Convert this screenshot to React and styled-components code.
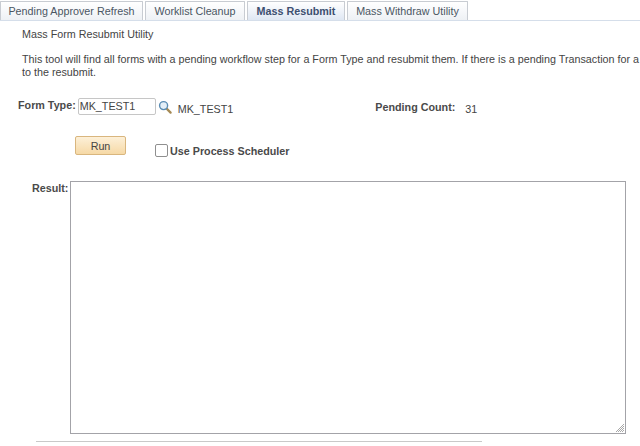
import React from 'react';
import styled, { createGlobalStyle } from 'styled-components';

const Global = createGlobalStyle`
	html, body {
		margin: 0;
		padding: 0;
		background: #fff;
		overflow: hidden;
	}
	body {
		font-family: "Liberation Sans", Arial, sans-serif;
		color: #333;
	}
`;

const Page = styled.div`
	width: 640px;
	height: 446px;
	overflow: hidden;
	display: flex;
	flex-direction: column;
`;

const TabBar = styled.div`
	display: flex;
	align-items: flex-end;
	gap: 2px;
	height: 20px;
	border-bottom: 1px solid #d5deea;
`;

const Tab = styled.div`
	height: 19px;
	box-sizing: border-box;
	display: flex;
	align-items: center;
	justify-content: center;
	width: ${p => p.$width}px;
	font-size: 10.75px;
	font-weight: ${p => (p.$active ? 700 : 400)};
	color: ${p => (p.$active ? '#3d4f70' : '#4a5663')};
	background: ${p => (p.$active ? 'linear-gradient(#fff, #dfe7f3)' : 'linear-gradient(#fff, #eef1f5)')};
	border: 1px solid #c8ccd2;
	border-bottom: 0;
	border-radius: 1px 1px 0 0;
	white-space: nowrap;
`;

const Content = styled.div`
	padding-left: 22px;
`;

const Heading = styled.div`
	margin-top: 6px;
	font-size: 10.75px;
	line-height: 14px;
	color: #444;
`;

const Intro = styled.p`
	margin: 12px 0 0;
	font-size: 10.75px;
	line-height: 13px;
	color: #444;
	white-space: nowrap;
`;

const Label = styled.label`
	font-size: 10.75px;
	font-weight: 700;
	color: #4a4a4a;
	white-space: nowrap;
`;

const FormRow = styled.div`
	display: flex;
	align-items: flex-start;
	margin-top: 19px;
	padding-left: 18px;
	height: 18px;
`;

const FormLabel = styled(Label)`
	line-height: 15px;
	margin-right: 2px;
`;

const TextBox = styled.div`
	box-sizing: border-box;
	width: 78px;
	height: 17px;
	padding-left: 1px;
	border: 1px solid #c6c6c6;
	border-radius: 2px;
	font-size: 10.75px;
	line-height: 14px;
	color: #444;
`;

const SearchIcon = styled.svg`
	width: 14px;
	height: 14px;
	margin: 2px 0 0 2px;
`;

const Value = styled.span`
	font-size: 10.75px;
	line-height: 14px;
	color: #444;
	margin: 4px 0 0 ${p => p.$left}px;
`;

const Pending = styled(Label)`
	line-height: 14px;
	margin: 2px 0 0 142px;
`;

const ActionRow = styled.div`
	display: flex;
	align-items: flex-start;
	margin-top: 20px;
	padding-left: 75px;
	height: 26px;
`;

const RunButton = styled.button`
	box-sizing: border-box;
	width: 51px;
	height: 19px;
	padding: 0;
	font: 400 10.75px "Liberation Sans", Arial, sans-serif;
	color: #444;
	background: linear-gradient(#fdf0d8, #f6d9a6);
	border: 1px solid #d9b67e;
	border-radius: 2px;
`;

const CheckLabel = styled.div`
	display: flex;
	align-items: center;
	margin: 9px 0 0 29px;
`;

const CheckBox = styled.span`
	box-sizing: border-box;
	width: 13px;
	height: 13px;
	margin: -2px 2px 0 0;
	background: #fff;
	border: 1px solid #8f8f8f;
	border-radius: 2px;
`;

const ResultRow = styled.div`
	display: flex;
	align-items: flex-start;
	margin-top: 19px;
	padding-left: 32px;
`;

const ResultLabel = styled(Label)`
	line-height: 14px;
	width: 38px;
`;

const ResultBox = styled.div`
	position: relative;
	box-sizing: border-box;
	width: 556px;
	height: 253px;
	background: #fff;
	border: 1px solid #a3a3a8;
`;

const Grip = styled.svg`
	position: absolute;
	right: 1px;
	bottom: 1px;
	width: 8px;
	height: 8px;
`;

const Rule = styled.div`
	width: 446px;
	height: 1px;
	margin: 7px 0 0 36px;
	background: #c9c9c9;
`;

const tabs = [
	{ name: 'Pending Approver Refresh', width: 143 },
	{ name: 'Worklist Cleanup', width: 100 },
	{ name: 'Mass Resubmit', width: 98, active: true },
	{ name: 'Mass Withdraw Utility', width: 121 }
];

export default function App() {
	return (
		<Page>
			<Global />
			<TabBar>
				{tabs.map(t => (
					<Tab key={t.name} $width={t.width} $active={t.active}>
						{t.name}
					</Tab>
				))}
			</TabBar>
			<Content>
				<Heading>Mass Form Resubmit Utility</Heading>
				<Intro>
					This tool will find all forms with a pending workflow step for a Form Type and resubmit them. If there is a pending Transaction for a form
					<br />
					to the resubmit.
				</Intro>
			</Content>
			<FormRow>
				<FormLabel>Form Type:</FormLabel>
				<TextBox>MK_TEST1</TextBox>
				<SearchIcon viewBox="0 0 15 15">
					<line x1="9" y1="9" x2="13.5" y2="13.5" stroke="#a58a55" strokeWidth="2.4" strokeLinecap="round" />
					<circle cx="6" cy="6" r="4.3" fill="#e4eff8" stroke="#5a8cb3" strokeWidth="1.5" />
				</SearchIcon>
				<Value $left={6}>MK_TEST1</Value>
				<Pending>Pending Count:</Pending>
				<Value $left={10}>31</Value>
			</FormRow>
			<ActionRow>
				<RunButton>Run</RunButton>
				<CheckLabel>
					<CheckBox />
					<Label>Use Process Scheduler</Label>
				</CheckLabel>
			</ActionRow>
			<ResultRow>
				<ResultLabel>Result:</ResultLabel>
				<ResultBox>
					<Grip viewBox="0 0 8 8">
						<path d="M8 0 L0 8 M8 2 L2 8 M8 4 L4 8 M8 6 L6 8" stroke="#a8a8a8" strokeWidth="1" fill="none" />
					</Grip>
				</ResultBox>
			</ResultRow>
			<Rule />
		</Page>
	);
}
